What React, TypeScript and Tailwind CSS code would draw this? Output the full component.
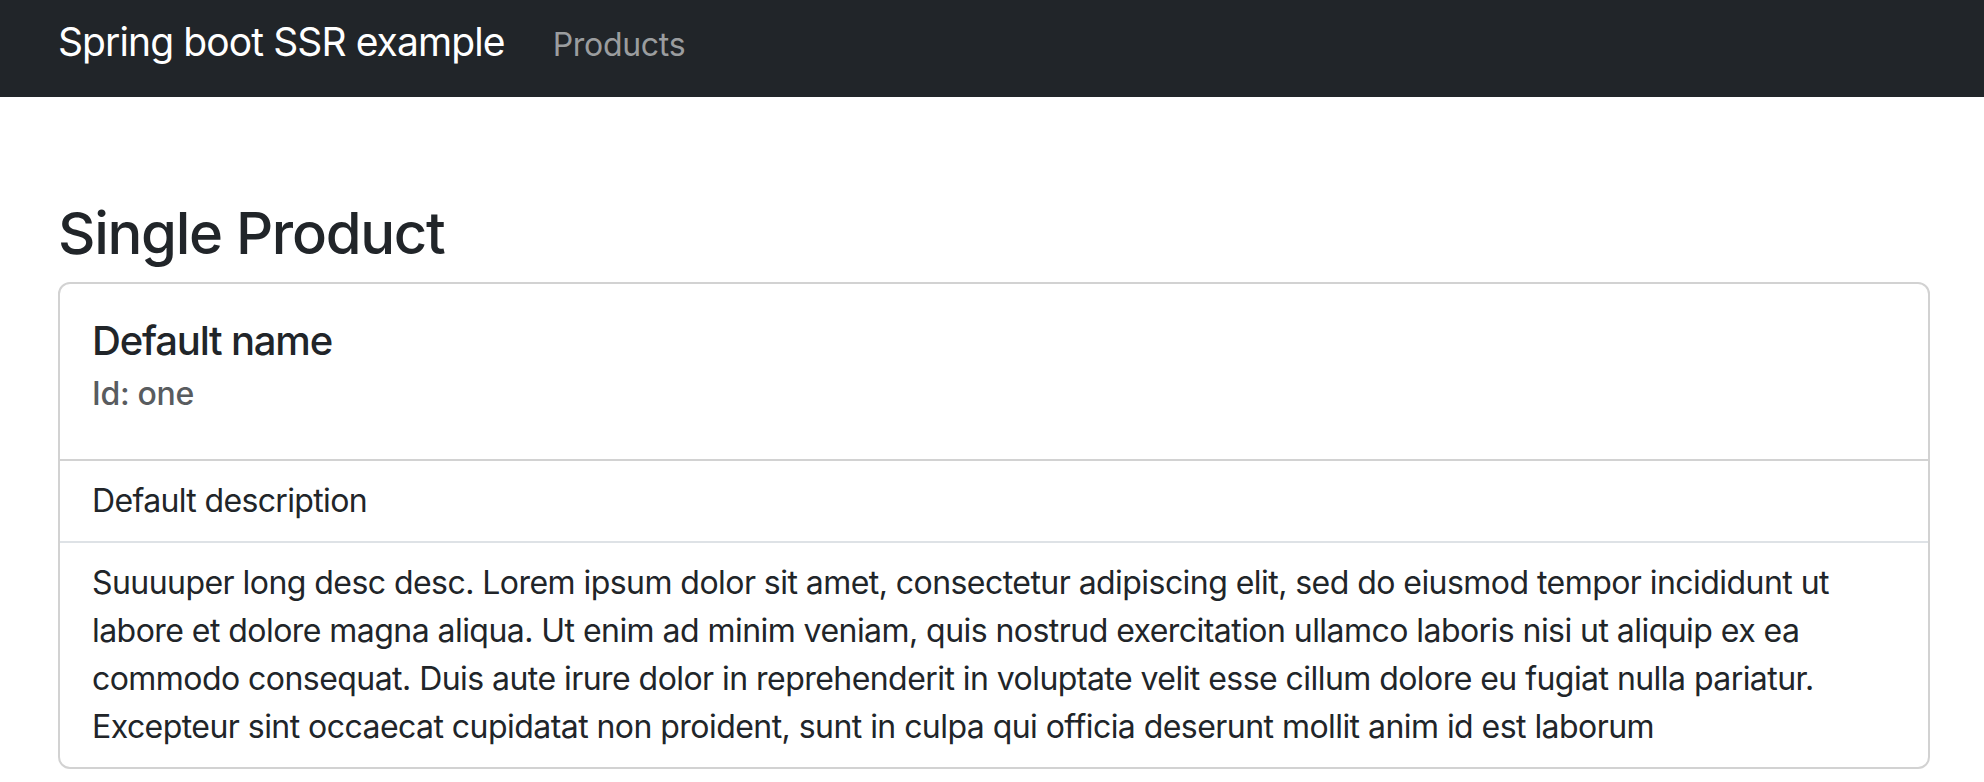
import React from 'react';

const product = {
  id: 'one',
  name: 'Default name',
  description: 'Default description',
  longDescription:
    'Suuuuper long desc desc. Lorem ipsum dolor sit amet, consectetur adipiscing elit, sed do eiusmod tempor incididunt ut labore et dolore magna aliqua. Ut enim ad minim veniam, quis nostrud exercitation ullamco laboris nisi ut aliquip ex ea commodo consequat. Duis aute irure dolor in reprehenderit in voluptate velit esse cillum dolore eu fugiat nulla pariatur. Excepteur sint occaecat cupidatat non proident, sunt in culpa qui officia deserunt mollit anim id est laborum',
};

const App: React.FC = () => {
  return (
    <div className="min-h-screen bg-white text-[#212529] font-['Inter','Liberation_Sans',sans-serif]">
      <nav className="h-[97px] bg-[#212529] pl-[58px] pr-[54px] pt-[12px]">
        <div className="flex items-baseline">
          <a href="#" className="text-[39px] leading-[60px] text-white mr-[48px] tracking-[-0.9px]">
            Spring boot SSR example
          </a>
          <a href="#" className="text-[32px] leading-[48px] text-[#9b9d9f] tracking-[-0.3px]">
            Products
          </a>
        </div>
      </nav>

      <main className="pl-[58px] pr-[54px]">
        <h2 className="mt-[100px] mb-[13px] text-[58px] leading-[72px] font-medium tracking-[-1.3px]">
          Single Product
        </h2>

        <div className="border-2 border-[#d2d2d2] rounded-[12px] overflow-hidden">
          <div className="px-[32px] pt-[33px] pb-[32px]">
            <h5 className="text-[40px] leading-[48px] font-medium mb-[10px] tracking-[-1.2px]">{product.name}</h5>
            <h6 className="text-[32px] leading-[38px] font-medium text-[#595c5f] mb-[14px] tracking-[-0.3px]">
              Id: {product.id}
            </h6>
          </div>
          <ul className="border-t-2 border-[#d2d2d2]">
            <li className="px-[32px] py-[16px] text-[32px] leading-[48px] border-b-2 border-[#dee2e6] tracking-[-0.65px]">
              {product.description}
            </li>
            <li className="px-[32px] py-[16px] text-[32px] leading-[48px] tracking-[-0.55px]">
              {product.longDescription}
            </li>
          </ul>
        </div>
      </main>
    </div>
  );
};

export default App;
